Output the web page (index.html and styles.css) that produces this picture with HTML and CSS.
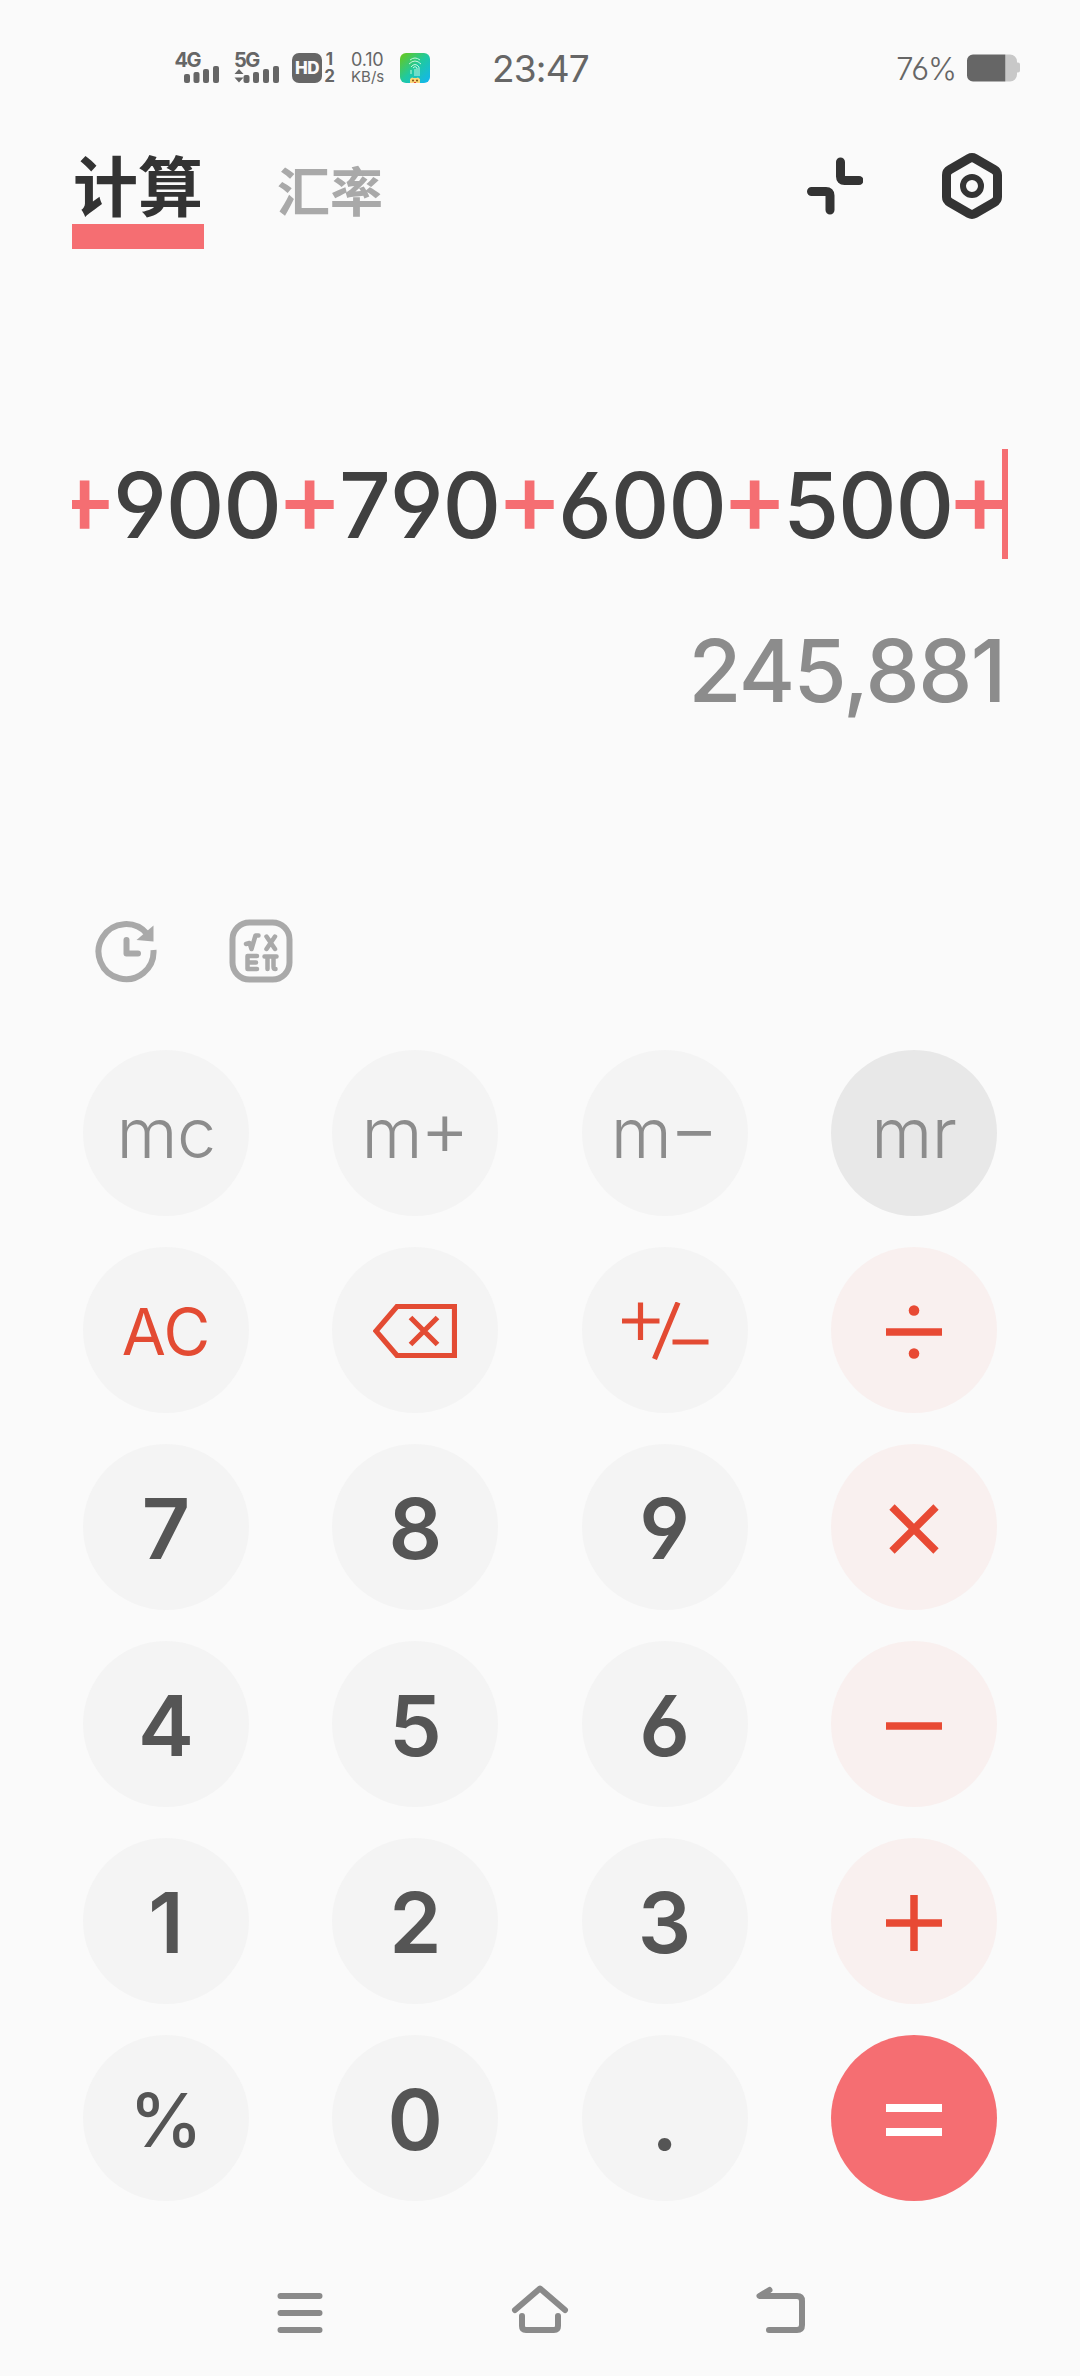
FILE: index.html
```html
<!DOCTYPE html>
<html lang="zh-CN">
<head>
    <meta charset="UTF-8">
    <meta name="viewport" content="width=device-width, initial-scale=1.0">
    <title>计算</title>
    <link rel="stylesheet" href="styles.css">
</head>
<body>
    <div class="status-bar">
        <svg class="signal" width="46" height="32" viewBox="0 0 46 32">
            <text x="-0.5" y="15" class="net">4G</text>
            <rect x="9" y="22" width="6" height="9" rx="2"/>
            <rect x="18.5" y="20" width="6" height="11" rx="2"/>
            <rect x="28" y="17" width="6" height="14" rx="2"/>
            <rect x="38" y="14" width="6" height="17" rx="2"/>
        </svg>
        <svg class="signal signal-5g" width="46" height="32" viewBox="0 0 46 32">
            <text x="0" y="15" class="net">5G</text>
            <path d="M0.500 22l4.500-5 4.500 5zM0.500 25.500h9l-4.500 5z"/>
            <rect x="9.500" y="23" width="6" height="8" rx="2"/>
            <rect x="19" y="20" width="6" height="11" rx="2"/>
            <rect x="29" y="17" width="6" height="14" rx="2"/>
            <rect x="39" y="14" width="6" height="17" rx="2"/>
        </svg>
        <div class="hd">HD</div>
        <div class="sims"><span>1</span><span>2</span></div>
        <div class="speed"><span class="speed-num">0.10</span><span class="speed-unit">KB/s</span></div>
        <svg class="app" width="30" height="30" viewBox="0 0 30 30">
            <defs>
                <linearGradient id="appBg" x1="0" y1="0" x2="1" y2="1">
                    <stop offset="0" stop-color="#6cc814"/>
                    <stop offset="0.5" stop-color="#1fc9a0"/>
                    <stop offset="1" stop-color="#12b4f5"/>
                </linearGradient>
            </defs>
            <rect width="30" height="30" rx="6" fill="url(#appBg)"/>
            <g fill="none" stroke="#c5f7dd" stroke-width="1">
                <path d="M10 7q5-4 10 0M9 11q6-6 12 0M11 14q4-5 8 0v9M13 15q2-3 4 0v8M15 16v7M11 17v4"/>
            </g>
            <path d="M10 30v-4l2-1.500q3 1 6 0l2 1.500v4z" fill="#fbd879"/>
            <circle cx="13" cy="27.500" r="1" fill="#7a4a12"/>
            <circle cx="17" cy="27.500" r="1" fill="#7a4a12"/>
            <path d="M14 29h2v1h-2z" fill="#e5452f"/>
        </svg>
        <div class="time">23:47</div>
        <div class="percent">76%</div>
        <svg class="battery" width="54" height="28" viewBox="0 0 54 28">
            <path d="M39 0.500h4a7 7 0 0 1 7 7v1h1a2 2 0 0 1 2 2v6a2 2 0 0 1-2 2h-1v2a7 7 0 0 1-7 7h-4z" fill="#c8c8c8"/>
            <path d="M6 0.500h32.500v27H6a6 6 0 0 1-6-6v-15a6 6 0 0 1 6-6z" fill="#666"/>
        </svg>
    </div>

    <div class="header">
        <div class="tab active">计算</div>
        <div class="tab">汇率</div>
        <svg class="collapse" width="56" height="58" viewBox="0 0 56 58">
            <path d="M33.500 5v14.500q0 4 4 4H52M4.500 34.500H19q4 0 4 4V53"/>
        </svg>
        <svg class="settings" width="60" height="66" viewBox="0 0 60 66">
            <path d="M27 5.500q3-1.700 6 0l19 11q3.500 2 3.500 5.500v22q0 3.500-3.500 5.500l-19 11q-3 1.700-6 0l-19-11q-3.500-2-3.500-5.500V22q0-3.500 3.500-5.500z"/>
            <circle cx="30" cy="33" r="9" stroke-width="6"/>
        </svg>
    </div>

    <div class="display">
        <div class="expression">
            <span class="op">+</span><span class="num">900</span><span class="op">+</span><span class="num narrow">790</span><span class="op">+</span><span class="num">600</span><span class="op">+</span><span class="num">500</span><span class="op">+</span>
            <i class="cursor"></i>
        </div>
        <div class="result">245,881</div>
    </div>

    <div class="tools">
        <svg width="64" height="64" viewBox="0 0 64 64">
            <path d="M53 14.800A27.500 27.500 0 1 0 59.500 31" fill="none" stroke="#a9a9a9" stroke-width="6"/>
            <path d="M59.500 6.500V22.500l-17-1.500z" fill="#a9a9a9"/>
            <path d="M32.500 21V34.500H44" fill="none" stroke="#a9a9a9" stroke-width="6" stroke-linecap="round" stroke-linejoin="round"/>
        </svg>
        <svg width="64" height="64" viewBox="0 0 64 64">
            <rect x="3.500" y="3.500" width="57" height="57" rx="17" fill="none" stroke="#a9a9a9" stroke-width="6"/>
            <g fill="none" stroke="#a9a9a9" stroke-width="4.500" stroke-linecap="round" stroke-linejoin="round">
                <path d="M17 25l3.500-1 2 6 4-13.500h3M37.500 17.500l8.500 12.500M46 17.500l-8.500 12.500"/>
                <path d="M28 37H18.500v13H28M18.500 43.500H27M35.500 37.500H47.500M38.500 38v12M44.500 38v10q0 2 2 2"/>
            </g>
        </svg>
    </div>

    <div class="keypad">
        <div class="key mem">mc</div>
        <div class="key mem">m<span class="mem-op">+</span></div>
        <div class="key mem">m<span class="mem-op">−</span></div>
        <div class="key mem pressed">mr</div>

        <div class="key ac">AC</div>
        <div class="key fn">
            <svg width="84" height="54" viewBox="0 0 84 54">
                <path d="M24 2.500H81.500V51.500H24L3 27zM37.500 13.500L64.500 40.500M64.500 13.500L37.500 40.500"/>
            </svg>
        </div>
        <div class="key fn">
            <svg width="88" height="58" viewBox="0 0 88 58">
                <path d="M1 19H38.500M19.500 0.500V38M57 0.500L33.500 57M51.500 40H87.500"/>
            </svg>
        </div>
        <div class="key sign">
            <svg width="56" height="56" viewBox="0 0 56 56">
                <path d="M0 28H56"/>
                <circle cx="28" cy="6.500" r="5.300"/>
                <circle cx="28" cy="49.500" r="5.300"/>
            </svg>
        </div>

        <div class="key">7</div>
        <div class="key">8</div>
        <div class="key">9</div>
        <div class="key sign">
            <svg width="56" height="56" viewBox="0 0 56 56"><path d="M6 6L50 50M50 6L6 50"/></svg>
        </div>

        <div class="key">4</div>
        <div class="key">5</div>
        <div class="key">6</div>
        <div class="key sign">
            <svg width="56" height="56" viewBox="0 0 56 56"><path d="M0 28H56"/></svg>
        </div>

        <div class="key">1</div>
        <div class="key">2</div>
        <div class="key">3</div>
        <div class="key sign">
            <svg width="56" height="56" viewBox="0 0 56 56"><path d="M0 28H56M28 0V56"/></svg>
        </div>

        <div class="key percent-key">%</div>
        <div class="key">0</div>
        <div class="key">.</div>
        <div class="key equals">
            <svg width="56" height="56" viewBox="0 0 56 56"><path d="M0 16H56M0 40H56"/></svg>
        </div>
    </div>

    <div class="nav-bar">
        <svg width="60" height="48" viewBox="0 0 60 48">
            <path d="M10.500 11H49.500M10.500 28H49.500M10.500 45H49.500"/>
        </svg>
        <svg width="60" height="48" viewBox="0 0 60 48">
            <path d="M5 25L30 3.500L55 25M12 31V41q0 4 4 4H44q4 0 4-4V31"/>
        </svg>
        <svg width="60" height="48" viewBox="0 0 60 48">
            <path d="M19.500 5L9.500 11H47q5 0 5 5V40q0 5-5 5H19"/>
        </svg>
    </div>
</body>
</html>
```
FILE: styles.css
```css
body, html {
    margin: 0;
    padding: 0;
}
body {
    width: 1080px;
    height: 2376px;
    overflow: hidden;
    background-color: #fafafa;
    font-family: 'Inter', 'Noto Sans CJK SC', sans-serif;
    font-feature-settings: 'cv03', 'cv04';
    display: flex;
    flex-direction: column;
}
svg {
    display: block;
    flex: none;
}

/* status bar */
.status-bar {
    height: 136px;
    box-sizing: border-box;
    padding: 0 59px 0 175px;
    display: flex;
    align-items: center;
    color: #666;
}
.signal {
    fill: #666;
    overflow: visible;
}
.signal-5g {
    margin-left: 13px;
}
.net {
    font-size: 20px;
    font-weight: 700;
    letter-spacing: -1.5px;
}
.hd {
    margin-left: 12px;
    width: 30px;
    height: 30px;
    line-height: 30px;
    border-radius: 7px;
    background-color: #666;
    color: #fafafa;
    font-size: 17px;
    font-weight: 800;
    letter-spacing: -0.5px;
    text-align: center;
}
.sims {
    margin-left: 2px;
    width: 11px;
    display: flex;
    flex-direction: column;
    align-items: center;
    font-size: 17px;
    font-weight: 700;
    line-height: 17px;
}
.speed {
    margin-left: 16px;
    width: 36px;
    display: flex;
    flex-direction: column;
    line-height: 17px;
}
.speed-num {
    font-size: 18px;
    letter-spacing: -0.2px;
}
.speed-unit {
    font-size: 15px;
}
.app {
    margin-left: 13px;
}
.time {
    margin: 0 0 0 62px;
    font-size: 37px;
    letter-spacing: -0.8px;
}
.percent {
    margin: 0 0 0 auto;
    font-size: 31px;
    font-weight: 350;
}
.battery {
    margin-left: 10px;
}

/* tabs */
.header {
    height: 136px;
    padding: 0 78px 0 72px;
    display: flex;
}
.tab {
    margin-top: 14px;
    height: 78px;
    line-height: 78px;
    font-family: 'Noto Sans CJK SC', sans-serif;
    font-size: 53px;
    font-weight: 700;
    color: #a9a9a9;
}
.tab.active {
    margin-top: 10px;
    margin-right: 73px;
    width: 132px;
    height: 78px;
    border-bottom: 25px solid #f56e72;
    font-size: 65px;
    line-height: 74px;
    color: #333;
    text-align: center;
}
.collapse, .settings {
    fill: none;
    stroke: #333;
    stroke-width: 9;
    stroke-linecap: round;
}
.collapse {
    margin: 21px 0 0 auto;
}
.settings {
    margin: 17px 0 0 79px;
}

/* expression and result */
.display {
    height: 628px;
    padding: 0 72px;
}
.expression {
    margin-top: 177px;
    height: 110px;
    display: flex;
    justify-content: flex-end;
    overflow: hidden;
    position: relative;
    font-size: 91px;
    font-weight: 500;
    line-height: 112px;
    color: #404040;
}
.num {
    flex: none;
    width: 168px;
    text-align: center;
    letter-spacing: -1.2px;
}
.narrow {
    width: 163px;
}
.op {
    flex: none;
    width: 57px;
    display: flex;
    justify-content: center;
    font-size: 100px;
    font-feature-settings: 'case';
    color: #f56e72;
}
.cursor {
    position: absolute;
    right: 0;
    width: 6px;
    height: 110px;
    background-color: #f56e72;
}
.result {
    margin-top: 56px;
    padding-right: 3px;
    text-align: right;
    font-size: 86px;
    font-weight: 500;
    line-height: 112px;
    letter-spacing: -1.5px;
    color: #8c8c8c;
}

/* history and function shortcuts */
.tools {
    margin-top: 19px;
    height: 130.5px;
    padding-left: 94px;
    display: flex;
    gap: 71px;
}

/* keys */
.keypad {
    padding-left: 83px;
    display: grid;
    grid-template-columns: repeat(4, 166px);
    grid-auto-rows: 166px;
    gap: 31.1px 83.3px;
}
.key {
    box-sizing: border-box;
    padding-top: 4px;
    border-radius: 50%;
    background-color: #f4f4f4;
    color: #555;
    font-size: 84px;
    font-weight: 600;
    display: flex;
    justify-content: center;
    align-items: center;
}
.mem {
    padding-top: 0;
    color: #8c8c8c;
    font-size: 70px;
    font-weight: 350;
    letter-spacing: -0.5px;
}
.mem-op {
    font-size: 76px;
    font-feature-settings: 'case';
    margin-left: -2px;
}
.pressed {
    background-color: #e8e8e8;
}
.ac {
    padding-top: 3px;
    color: #e34b33;
    font-size: 64px;
    font-weight: 400;
}
.fn svg {
    fill: none;
    stroke: #e34b33;
    stroke-width: 5.2;
}
.fn {
    padding-top: 3px;
}
.sign {
    background-color: #f9f0ef;
}
.sign svg {
    fill: #e84a34;
    stroke: #e84a34;
}
.sign path {
    stroke-width: 7.5;
}
.sign circle {
    stroke: none;
}
.percent-key {
    font-size: 74px;
    font-weight: 500;
}
.equals {
    background-color: #f56e72;
}
.equals svg {
    stroke: #fff;
    stroke-width: 8;
}

/* system navigation */
.nav-bar {
    margin-top: 84px;
    padding: 0 270px;
    display: flex;
    justify-content: space-between;
}
.nav-bar svg {
    fill: none;
    stroke: #8a8a8a;
    stroke-width: 6;
    stroke-linecap: round;
    stroke-linejoin: round;
}
```
